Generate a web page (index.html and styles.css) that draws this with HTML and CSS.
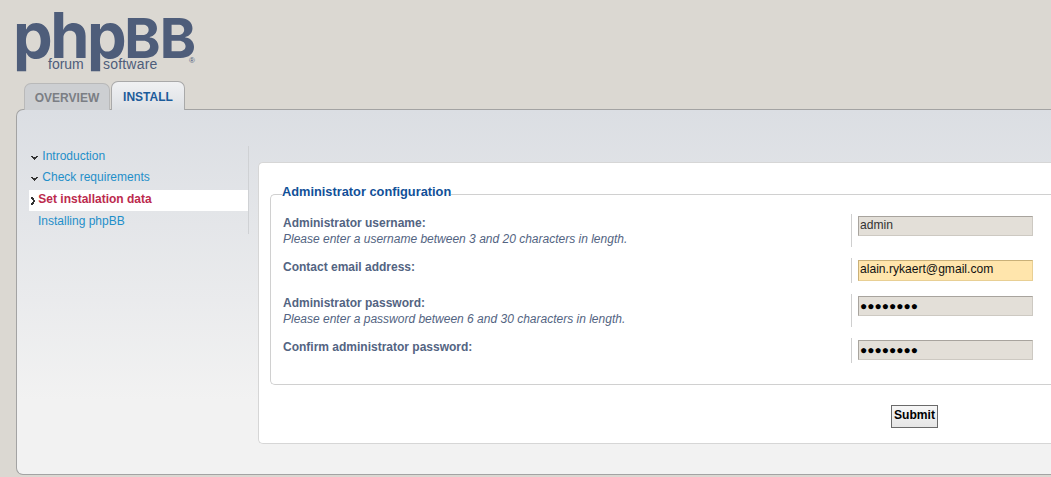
FILE: index.html
```html
<!DOCTYPE html>
<html lang="en">
<head>
    <meta charset="UTF-8">
    <meta name="viewport" content="width=device-width, initial-scale=1.0">
    <title>phpBB Installation</title>
    <link rel="stylesheet" href="styles.css">
</head>
<body>
    <div class="wrap">
        <div class="logo">
            <span class="logo-php">php</span><span class="logo-bb">BB</span>
            <span class="logo-forum">forum</span>
            <span class="logo-software">software</span>
            <span class="logo-reg">®</span>
        </div>

        <ul class="tabs">
            <li class="tab"><a href="#">OVERVIEW</a></li>
            <li class="tab active"><a href="#">INSTALL</a></li>
        </ul>

        <div class="panel">
            <div class="menu">
                <ul>
                    <li class="done">
                        <svg class="mark" width="7" height="4" viewBox="0 0 7 4"><path d="M0 0h2v1h3V0h2v1H6v1H5v1H4v1H3V3H2V2H1V1H0z" fill="#333"/></svg>
                        <a href="#">Introduction</a>
                    </li>
                    <li class="done">
                        <svg class="mark" width="7" height="4" viewBox="0 0 7 4"><path d="M0 0h2v1h3V0h2v1H6v1H5v1H4v1H3V3H2V2H1V1H0z" fill="#333"/></svg>
                        <a href="#">Check requirements</a>
                    </li>
                    <li class="current">
                        <svg class="mark-right" width="4" height="8" viewBox="0 0 4 8"><path d="M0 0h2v1h1v2h1v2H3v2H2v1H0V6h1V5h1V3H1V2H0z" fill="#333"/></svg>
                        <a href="#">Set installation data</a>
                    </li>
                    <li class="todo"><a href="#">Installing phpBB</a></li>
                </ul>
            </div>

            <div class="main">
                <form>
                    <fieldset>
                        <legend>Administrator configuration</legend>

                        <div class="row row-tall">
                            <div class="label">
                                <label>Administrator username:</label>
                                <span class="explain">Please enter a username between 3 and 20 characters in length.</span>
                            </div>
                            <div class="field"><input class="inputbox" type="text" value="admin"></div>
                        </div>

                        <div class="row row-short">
                            <div class="label">
                                <label>Contact email address:</label>
                            </div>
                            <div class="field"><input class="inputbox focus" type="text" value="alain.rykaert@gmail.com"></div>
                        </div>

                        <div class="row row-tall">
                            <div class="label">
                                <label>Administrator password:</label>
                                <span class="explain">Please enter a password between 6 and 30 characters in length.</span>
                            </div>
                            <div class="field"><input class="inputbox pass" type="text" value="●●●●●●●●"></div>
                        </div>

                        <div class="row row-short">
                            <div class="label">
                                <label>Confirm administrator password:</label>
                            </div>
                            <div class="field"><input class="inputbox pass" type="text" value="●●●●●●●●"></div>
                        </div>
                    </fieldset>

                    <div class="submit-row">
                        <button class="btn" type="button">Submit</button>
                    </div>
                </form>
            </div>
        </div>
    </div>
</body>
</html>
```

FILE: styles.css
```css
html, body {
    height: 100%;
    overflow: hidden;
}

body {
    margin: 0;
    background-color: #dbd8d2;
    font-family: "Liberation Sans", Arial, sans-serif;
    font-size: 12px;
    color: #536482;
}

a {
    text-decoration: none;
}

ul {
    margin: 0;
    padding: 0;
    list-style: none;
}

.wrap {
    padding-left: 16px;
}

/* logo */
.logo {
    position: relative;
    display: flex;
    align-items: baseline;
    height: 81px;
    width: 190px;
    color: #4e5d7a;
}

.logo-php {
    margin-left: -3px;
    font-family: Inter, sans-serif;
    font-size: 63px;
    font-weight: 700;
    line-height: 70px;
    letter-spacing: -2.5px;
}

.logo-bb {
    font-family: Inter, sans-serif;
    font-size: 55px;
    font-weight: 700;
    line-height: 70px;
    letter-spacing: -0.8px;
}

.logo-forum,
.logo-software {
    position: absolute;
    top: 56px;
    font-size: 14px;
    line-height: 16px;
}

.logo-forum {
    left: 32px;
}

.logo-software {
    left: 87px;
    letter-spacing: 0.2px;
}

.logo-reg {
    position: absolute;
    left: 173px;
    top: 56px;
    font-size: 8px;
    line-height: 10px;
}

/* tabs */
.tabs {
    display: flex;
    align-items: flex-end;
    gap: 1px;
    height: 29px;
    margin-bottom: -1px;
    padding-left: 8px;
    position: relative;
    z-index: 1;
}

.tab {
    height: 27px;
    width: 86px;
    box-sizing: border-box;
    background-color: #cdcfd2;
    border: 1px solid #b9b9b9;
    border-bottom: 0;
    border-radius: 7px 7px 0 0;
    text-align: center;
    font-weight: bold;
    line-height: 28px;
}

.tab a {
    color: #7b7e84;
}

.tab.active {
    height: 29px;
    width: 74px;
    background: linear-gradient(#f0f1f3, #dde0e4);
    border-color: #a9a9a9;
    line-height: 30px;
}

.tab.active a {
    color: #1c5c9a;
}

/* panel */
.panel {
    display: flex;
    align-items: flex-start;
    height: 366px;
    box-sizing: border-box;
    padding: 36px 0 0 12px;
    background: linear-gradient(#dbdee3, #f2f2f2 80%);
    border: 1px solid #a3a3a3;
    border-right: 0;
    border-radius: 7px 0 0 7px;
}

.menu {
    flex: none;
    width: 219px;
    height: 88px;
    margin-right: 9px;
    border-right: 1px solid #cfd1d4;
}

.menu li {
    height: 21px;
    line-height: 20px;
    white-space: nowrap;
}

.menu li.done {
    padding-left: 2px;
}

.menu li a {
    color: #1f8fc9;
}

.menu li.current {
    margin-top: 2px;
    background-color: #fff;
    font-weight: bold;
    line-height: 18px;
    padding-left: 2px;
}

.menu li.current a {
    color: #bc2a4d;
}

.menu li.todo {
    padding-left: 9px;
}

.mark {
    margin-right: 1px;
    vertical-align: 0;
}

.mark-right {
    vertical-align: -2px;
}

/* main content */
.main {
    flex: 1;
    height: 282px;
    box-sizing: border-box;
    margin-top: 16px;
    padding: 20px 0 0 11px;
    background-color: #fff;
    border: 1px solid #d6d6d6;
    border-right: 0;
    border-radius: 5px 0 0 5px;
}

fieldset {
    margin: 0;
    height: 202px;
    box-sizing: border-box;
    padding: 9px 0 0 11px;
    border: 1px solid #d0d0d0;
    border-right: 0;
    border-radius: 5px 0 0 5px;
}

legend {
    padding: 0 0 5px;
    font-size: 12.8px;
    font-weight: bold;
    line-height: 17px;
    color: #115098;
}

.row {
    display: flex;
    margin-bottom: 11px;
}

.row-tall {
    height: 33px;
}

.row-short {
    height: 25px;
}

.label {
    width: 568px;
    padding: 1px 0 0 1px;
    line-height: 16px;
}

.label label {
    display: block;
    font-weight: bold;
}

.explain {
    display: block;
    font-style: italic;
}

.field {
    padding-left: 6px;
    border-left: 1px solid #cfcfcf;
}

.inputbox {
    display: block;
    width: 175px;
    height: 20px;
    box-sizing: border-box;
    margin: 2px 0 0;
    padding: 0 1px 2px;
    background-color: #e3dfd8;
    border: 1px solid #cdc9c2;
    border-top-color: #a8a49e;
    border-left-color: #a8a49e;
    font-family: "Liberation Sans", Arial, sans-serif;
    font-size: 12.1px;
    color: #333;
}

.inputbox.focus {
    height: 21px;
    padding-bottom: 3px;
    background-color: #ffe5ac;
    border-color: #e8cf94;
    border-top-color: #c9b078;
    border-left-color: #c9b078;
    color: #111;
}

.inputbox.pass {
    padding-bottom: 0;
    font-size: 12px;
    color: #000;
}

.submit-row {
    margin-top: 20px;
    padding-left: 621px;
}

.btn {
    width: 47px;
    height: 23px;
    padding: 0 0 3px;
    background: linear-gradient(#f6f6f6, #e6e6e6);
    border: 1px solid #6a6a6a;
    font-family: "Liberation Sans", Arial, sans-serif;
    font-size: 12.1px;
    font-weight: bold;
    color: #000;
}
```
